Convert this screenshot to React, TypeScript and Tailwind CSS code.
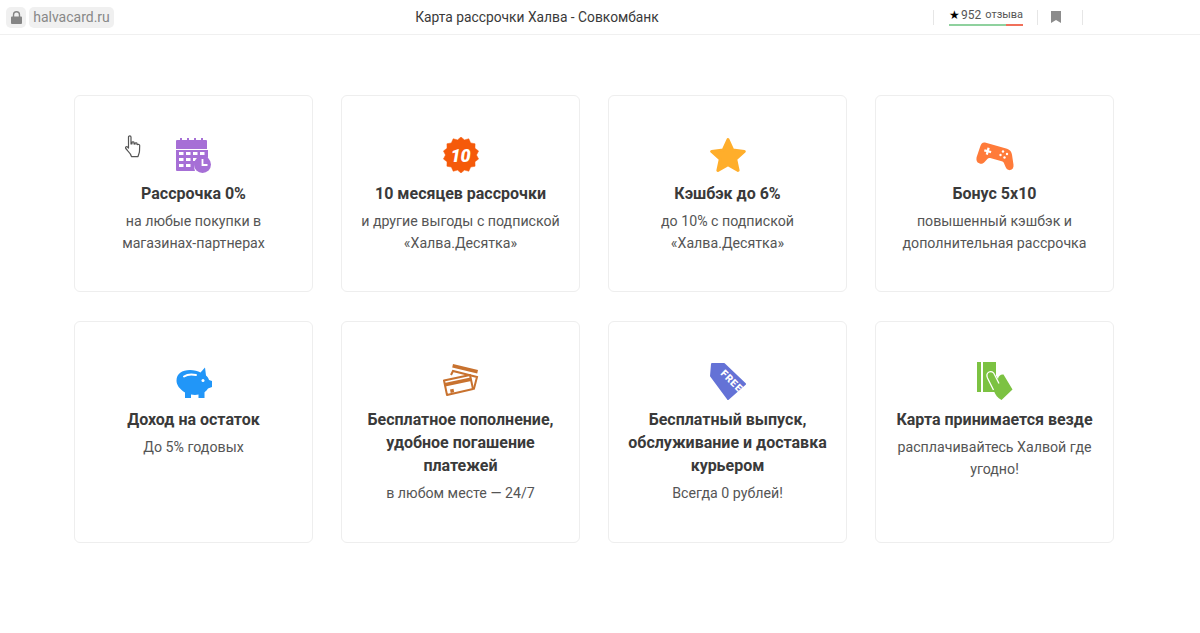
import React from "react";

// Points of the "10" badge: a burst with 14 teeth
const burstPoints = Array.from({ length: 28 }, (_, i) => {
  const r = i % 2 === 0 ? 18 : 15.5;
  const a = (Math.PI * i) / 14;
  return `${(18 + r * Math.sin(a)).toFixed(2)},${(18 - r * Math.cos(a)).toFixed(2)}`;
}).join(" ");

const CalendarIcon = () => (
  <svg viewBox="1 0 36 36" className="h-9 w-9">
    <path fill="#a66fd6" d="M2 3h3V1h2v2h5V1h2v2h5V1h2v2h5V1h2v2h3a1 1 0 0 1 1 1v8H1V4a1 1 0 0 1 1-1Z" />
    <path fill="#a66fd6" d="M1 13h32v8a10 10 0 0 0-13 13H2a1 1 0 0 1-1-1Z" />
    <g fill="#fff">
      <rect x="4" y="15" width="4.5" height="3" />
      <rect x="11" y="15" width="4.5" height="3" />
      <rect x="18" y="15" width="4.5" height="3" />
      <rect x="25" y="15" width="4.5" height="3" />
      <rect x="4" y="21" width="4.5" height="3" />
      <rect x="11" y="21" width="4.5" height="3" />
      <rect x="18" y="21" width="4.5" height="3" />
      <rect x="4" y="27" width="4.5" height="3" />
      <rect x="11" y="27" width="4.5" height="3" />
    </g>
    <circle cx="27.5" cy="27.5" r="8.5" fill="#a66fd6" />
    <path d="M27.5 22v6h5" fill="none" stroke="#fff" strokeWidth="1.8" />
  </svg>
);

const BurstIcon = () => (
  <svg viewBox="0 0 36 36" className="h-9 w-9">
    <polygon points={burstPoints} fill="#f55a0a" stroke="#f55a0a" strokeWidth="0.5" strokeLinejoin="round" />
    <text x="17.500" y="24.500" textAnchor="middle" fill="#fff" fontSize="18" fontWeight="900" fontStyle="italic" fontFamily="Roboto, sans-serif">
      10
    </text>
  </svg>
);

const StarIcon = () => (
  <svg viewBox="0 0 36 36" className="h-9 w-9">
    <path
      fill="#ffae2b"
      stroke="#ffae2b"
      strokeWidth="3"
      strokeLinejoin="round"
      d="M18 2.500l4.800 10.600 11.500 1.300-8.600 7.700 2.400 11.300L18 27.600 7.900 33.400l2.400-11.300-8.600-7.700 11.500-1.300Z"
    />
  </svg>
);

const GamepadIcon = () => (
  <svg viewBox="0 0 38 36" className="h-9 w-[38px]">
    <path
      fill="#ff7b3a"
      d="M9 5.500l22 6.200c3 .9 4.600 3 5 6l1.500 10c.3 3-1 5-3.300 5.400-2.200.3-3.800-1-4.600-3l-1.700-4.100c-.5-1-1.200-1.400-2.200-1.700l-11.500-3.200c-1-.3-1.900-.2-2.600.6l-3 3.400c-1.500 1.700-3.500 2.300-5.400 1.200C.7 25.400 0 23 .6 20.200L4.300 9.200c.8-2.700 2.400-4.200 4.700-3.700Z"
    />
    <path fill="#fff" d="M11.500 10.500l2.200.6-.6 2.300 2.300.6-.6 2.200-2.300-.6-.6 2.300-2.200-.6.6-2.300-2.300-.6.6-2.200 2.300.6Z" />
    <g fill="#fff">
      <circle cx="27" cy="14.500" r="1.200" />
      <circle cx="31" cy="17" r="1.200" />
      <circle cx="24.500" cy="18" r="1.200" />
      <circle cx="28.500" cy="20.500" r="1.200" />
    </g>
  </svg>
);

const PiggyIcon = () => (
  <svg viewBox="0 -2 36 36" className="h-9 w-9">
    <path
      fill="#2196f8"
      d="M14 5c4 0 8 1 10.500 2.500L29 2.500l1 8c1.500 1.200 2.500 2.800 3 4.500l3 1v6l-4 1.500c-.8 1.500-2 2.800-3.500 3.800V33h-6v-3.500c-2 .5-5 .5-7.500 0V33H9v-5.500C3.500 24 0.500 20 0.500 15.500 0.500 9 6 5 14 5Z"
    />
    <path d="M8 11.500c3-2 7-2.500 12-1.500" fill="none" stroke="#fff" strokeWidth="2" strokeLinecap="round" />
    <circle cx="27" cy="15.500" r="1.500" fill="#fff" />
  </svg>
);

const CardsIcon = () => (
  <svg viewBox="0 0 36 38" className="h-[38px] w-9" fill="none" stroke="#c8722f" strokeWidth="2">
    <path d="M10 2l25 6-.8 3.500-25-6Z" fill="#c8722f" stroke="none" />
    <path d="M8 13l2-4 24 6-3 11.500-3-.7" />
    <path d="M1 18.500l26-5.500 3 14-26 6Z" fill="#fff" strokeLinejoin="round" />
    <path d="M1.500 21l26-5.500.8 3.500-26 5.500Z" fill="#c8722f" stroke="none" />
    <path d="M7 27.500l3.500-.7.700 3.500-3.500.7Z" fill="#c8722f" stroke="none" />
  </svg>
);

const TagIcon = () => (
  <svg viewBox="0 0 36 38" className="h-[38px] w-9">
    <path fill="#6472d6" stroke="#6472d6" strokeWidth="2" strokeLinejoin="round" d="M2 2h12l21 20-17 15L1 14Z" />
    <text
      x="0"
      y="0"
      transform="translate(10 12) rotate(45)"
      fill="#fff"
      fontSize="10"
      fontWeight="900"
      letterSpacing="0.8"
      fontFamily="Roboto, sans-serif"
    >
      FREE
    </text>
  </svg>
);

const HandCardIcon = () => (
  <svg viewBox="0 0 36 38" className="h-[38px] w-9">
    <rect x="0" y="0" width="4" height="30" fill="#7cc242" />
    <rect x="6" y="0" width="13" height="30" fill="#7cc242" />
    <path
      fill="#7cc242"
      d="M12 10c2-2 5-1 6 2l3 5c.5-3.500 3-5 5.500-4.500l9 15-11 10.500c-4-2-6-5-8-10L10.500 16c-1-2.500-.5-5 1.500-6Z"
    />
    {/* white line around the finger */}
    <path
      d="M16.500 28 10.500 16c-1-2.500-.5-5 1.500-6 2-1 4.500 0 5.500 2.500l4.500 9"
      fill="none"
      stroke="#fff"
      strokeWidth="1.300"
    />
  </svg>
);

const features = [
  { icon: <CalendarIcon />, title: ["Рассрочка 0%"], text: ["на любые покупки в", "магазинах-партнерах"] },
  { icon: <BurstIcon />, title: ["10 месяцев рассрочки"], text: ["и другие выгоды с подпиской", "«Халва.Десятка»"] },
  { icon: <StarIcon />, title: ["Кэшбэк до 6%"], text: ["до 10% с подпиской", "«Халва.Десятка»"] },
  { icon: <GamepadIcon />, title: ["Бонус 5х10"], text: ["повышенный кэшбэк и", "дополнительная рассрочка"] },
  { icon: <PiggyIcon />, title: ["Доход на остаток"], text: ["До 5% годовых"] },
  {
    icon: <CardsIcon />,
    title: ["Бесплатное пополнение,", "удобное погашение", "платежей"],
    text: ["в любом месте — 24/7"],
  },
  {
    icon: <TagIcon />,
    title: ["Бесплатный выпуск,", "обслуживание и доставка", "курьером"],
    text: ["Всегда 0 рублей!"],
  },
  { icon: <HandCardIcon />, title: ["Карта принимается везде"], text: ["расплачивайтесь Халвой где", "угодно!"] },
];

export default function App() {
  return (
    <div className="relative h-[633px] w-full overflow-hidden bg-white font-['Roboto',sans-serif] text-[#333]">
      {/* Header */}
      <header className="flex h-[35px] items-center border-b border-[#f0f0f0] pl-[6px]">
        <div className="flex w-[135px] items-center gap-[3px]">
          <span className="flex h-[21px] w-[20px] items-center justify-center rounded-[5px] bg-[#f0f0f0]">
            <svg viewBox="0 0 12 14" className="h-[13px] w-[11px]" fill="#858585">
              <path d="M2 6V4a4 4 0 0 1 8 0v2h1a1 1 0 0 1 1 1v6a1 1 0 0 1-1 1H1a1 1 0 0 1-1-1V7a1 1 0 0 1 1-1Zm1.500 0h5V4a2.500 2.500 0 0 0-5 0Z" />
            </svg>
          </span>
          <span className="flex h-[21px] w-[85px] items-center justify-center rounded-[5px] bg-[#f0f0f0] text-[14px] text-[#888]">
            halvacard.ru
          </span>
        </div>
        <h1 className="flex-1 whitespace-nowrap text-center text-[13.8px] font-normal text-[#3a3a3a]">
          Карта рассрочки Халва - Совкомбанк
        </h1>
        <div className="flex w-[267px] items-center">
          <span className="h-[15px] w-px bg-[#e6e6e6]" />
          <div className="ml-[15px] flex w-[74px] flex-col">
            <span className="flex items-center whitespace-nowrap text-[12px] leading-[14px] text-[#555]">
              <span className="mr-[1px] text-[12px] text-black">★</span>
              952
              <span className="ml-[4px] text-[11px]">отзыва</span>
            </span>
            <span className="mt-[2px] flex h-[2px] w-full">
              <span className="w-[57px] bg-[#8fd19e]" />
              <span className="flex-1 bg-[#f0705a]" />
            </span>
          </div>
          <span className="ml-[14px] h-[15px] w-px bg-[#e6e6e6]" />
          <svg viewBox="0 0 10 12" className="ml-[13px] h-3 w-[10px]" fill="#8c8c8c">
            <path d="M0 0h10v12L5 9 0 12Z" />
          </svg>
          <span className="ml-[21px] h-[15px] w-px bg-[#e6e6e6]" />
        </div>
      </header>

      {/* Cards */}
      <main className="ml-[74px] mt-[60px] grid w-[1040px] grid-cols-4 grid-rows-[197px_222px] gap-x-[28px] gap-y-[29px]">
        {features.map((item) => (
          <div
            key={item.title[0]}
            className="flex flex-col items-center rounded-[6px] border border-[#eeeeee] px-2 pt-[41px] text-center"
          >
            <div className="flex h-9 items-center justify-center">{item.icon}</div>
            <div className="mt-[9px] text-[16px] font-bold leading-[23px] text-[#3a3a3a]">
              {item.title.map((line) => (
                <div key={line} className="whitespace-nowrap">
                  {line}
                </div>
              ))}
            </div>
            <div className="mt-[5px] text-[14.2px] leading-[22px] text-[#555]">
              {item.text.map((line) => (
                <div key={line} className="whitespace-nowrap">
                  {line}
                </div>
              ))}
            </div>
          </div>
        ))}
      </main>

      {/* Mouse pointer caught in the shot */}
      <svg viewBox="0 0 16 24" className="absolute left-[125px] top-[135px] h-6 w-4" fill="#fff" stroke="#555" strokeWidth="1.200" strokeLinejoin="round">
        <path d="M3.500 2c0-1.500 2.500-1.500 2.500 0v7l1-.2V7.500c0-1 2-1 2 0V9l1 .1V8.500c0-1 2-1 2 0v1l.7.100c.7-.5 2 0 2 1l-.2 5.500c0 2-1 3-1.500 5.500H6.500c-.5-2-1.500-3.500-3.500-5.500L.8 13.500c-.8-1.200.6-2.500 1.700-1.500l1 1Z" />
      </svg>
    </div>
  );
}
